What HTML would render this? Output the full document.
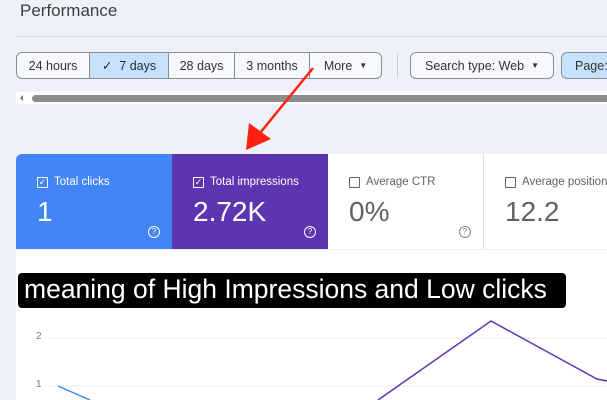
<!DOCTYPE html>
<html><head><meta charset="utf-8"><style>
*{margin:0;padding:0;box-sizing:border-box}
body{width:607px;height:400px;overflow:hidden;background:#eef2f8;font-family:"Liberation Sans",sans-serif;position:relative}
.abs{position:absolute}
.btn{position:absolute;top:52px;height:27px;border:1px solid #8a8f96;font-size:12.5px;color:#333;display:flex;align-items:center;justify-content:center;background:#f6f8fb}
.card{position:absolute;top:154px;height:95px;width:156px;padding:22px 0 0 21px}
.lab{font-size:11.5px;display:flex;align-items:center;gap:6px}
.cb{width:11px;height:11px;border:1px solid currentColor;border-radius:1px;font-size:9px;line-height:9px;text-align:center}
.val{font-size:28px;margin-top:8px}
.q{position:absolute;right:12px;bottom:11px;width:12px;height:12px;border:1px solid currentColor;border-radius:50%;font-size:8px;text-align:center;line-height:10px}
</style></head><body>
<div class="abs" style="left:20px;top:1px;font-size:17px;color:#3c4043">Performance</div>
<div class="abs" style="left:16px;top:36px;width:591px;height:1px;background:#d5d9de"></div>
<div class="btn" style="left:16px;width:74px;border-radius:6px 0 0 6px">24 hours</div>
<div class="btn" style="left:89px;width:80px;background:#c6e2fb;color:#1f2d3d">✓&nbsp; 7 days</div>
<div class="btn" style="left:168px;width:67px">28 days</div>
<div class="btn" style="left:234px;width:76px">3 months</div>
<div class="btn" style="left:309px;width:73px;border-radius:0 6px 6px 0">More &nbsp;<span style="font-size:8px">▼</span></div>
<div class="abs" style="left:397px;top:54px;width:1px;height:24px;background:#ccd"></div>
<div class="btn" style="left:410px;width:144px;border-radius:6px">Search type: Web &nbsp;<span style="font-size:8px">▼</span></div>
<div class="btn" style="left:561px;width:60px;border-radius:6px;background:#c6e2fb;justify-content:flex-start;padding-left:13px">Page:</div>
<div class="abs" style="left:16px;top:92px;width:591px;height:12px;background:#fff"></div>
<div class="abs" style="left:20px;top:95px;width:0;height:0;border-top:3px solid transparent;border-bottom:3px solid transparent;border-right:3px solid #777"></div>
<div class="abs" style="left:32px;top:95px;width:580px;height:7px;background:#8c8c8c;border-radius:4px"></div>
<div class="card" style="left:16px;background:#4285f4;color:#fff;border-radius:6px 0 0 0"><div class="lab"><span class="cb">✓</span>Total clicks</div><div class="val">1</div><div class="q">?</div></div>
<div class="card" style="left:172px;background:#5e35b1;color:#fff"><div class="lab"><span class="cb">✓</span>Total impressions</div><div class="val">2.72K</div><div class="q">?</div></div>
<div class="card" style="left:328px;background:#fff;color:#5f6368;border-right:1px solid #e0e0e0"><div class="lab"><span class="cb"></span>Average CTR</div><div class="val">0%</div><div class="q" style="color:#888">?</div></div>
<div class="card" style="left:484px;width:130px;background:#fff;color:#5f6368"><div class="lab" style="white-space:nowrap"><span class="cb"></span>Average position</div><div class="val">12.2</div></div>
<div class="abs" style="left:16px;top:250px;width:591px;height:150px;background:#fff"></div>
<div class="abs" style="left:36px;top:331px;font-size:10px;color:#777">2</div>
<div class="abs" style="left:36px;top:379px;font-size:10px;color:#777">1</div>
<svg class="abs" style="left:0;top:0" width="607" height="400">
<line x1="48" y1="338" x2="607" y2="338" stroke="#eee"/>
<line x1="48" y1="386" x2="607" y2="386" stroke="#eee"/>
<polyline points="58,386 90,400" fill="none" stroke="#4285f4" stroke-width="1.5"/>
<polyline points="378,400 491,321 597,379 607,381" fill="none" stroke="#5e35b1" stroke-width="1.5"/>
<line x1="313" y1="68" x2="260" y2="133" stroke="#f21" stroke-width="2.5"/>
<polygon points="246,150 249,123 271,139" fill="#f21"/>
</svg>
<div class="abs" style="left:18px;top:273px;width:548px;height:35px;background:#000;border-radius:4px;color:#fff;font-size:26.5px;line-height:33px;padding:0 0 0 6px;white-space:nowrap;overflow:hidden">meaning of High Impressions and Low clicks</div>
</body></html>
